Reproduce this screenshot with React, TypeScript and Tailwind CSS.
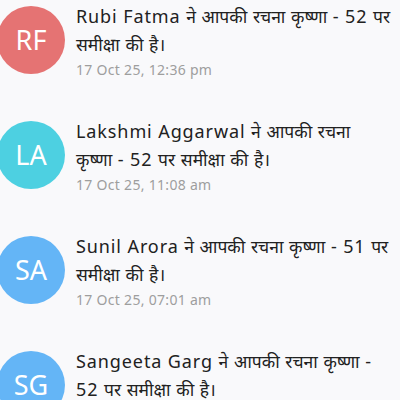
const items = [
  {
    initials: 'RF',
    color: 'bg-[#e57373]',
    lines: ['Rubi Fatma ने आपकी रचना कृष्णा - 52 पर', 'समीक्षा की है।'],
    time: '17 Oct 25, 12:36 pm',
  },
  {
    initials: 'LA',
    color: 'bg-[#4dd0e1]',
    lines: ['Lakshmi Aggarwal ने आपकी रचना', 'कृष्णा - 52 पर समीक्षा की है।'],
    time: '17 Oct 25, 11:08 am',
  },
  {
    initials: 'SA',
    color: 'bg-[#64b5f6]',
    lines: ['Sunil Arora ने आपकी रचना कृष्णा - 51 पर', 'समीक्षा की है।'],
    time: '17 Oct 25, 07:01 am',
  },
  {
    initials: 'SG',
    color: 'bg-[#64b5f6]',
    lines: ['Sangeeta Garg ने आपकी रचना कृष्णा -', '52 पर समीक्षा की है।'],
    time: '17 Oct 25, 06:40 am',
  },
];

// Devanagari runs are set a touch smaller so the mixed line keeps its width
function Line({ text }: { text: string }) {
  const parts = text.split(/([\u0900-\u097F]+)/);
  return (
    <span className="block whitespace-nowrap">
      {parts.map((p, i) =>
        /[\u0900-\u097F]/.test(p) ? (
          <span key={i} className="text-[17.5px] tracking-normal">
            {p}
          </span>
        ) : (
          <span key={i}>{p}</span>
        )
      )}
    </span>
  );
}

export default function App() {
  return (
    <main
      className="w-[400px] h-[400px] overflow-hidden bg-[#f9f9fb]"
      style={{ fontFamily: '"Noto Sans", "Open Sans", sans-serif' }}
    >
      <div className="flex flex-col pt-[2px]">
        {items.map((it) => (
          <div key={it.initials} className="flex items-start gap-[11px] h-[115px] shrink-0">
            <div
              className={`${it.color} w-[68px] h-[68px] rounded-full shrink-0 -ml-[3px] mt-[4px] flex items-center justify-center text-white text-[27px]`}
            >
              {it.initials}
            </div>
            <div className="flex flex-col">
              <p className="text-[18px] leading-[28px] tracking-[0.9px] text-[#212121]">
                {it.lines.map((l) => (
                  <Line key={l} text={l} />
                ))}
              </p>
              <p className="text-[14px] leading-[20px] tracking-[0.3px] text-[#9e9e9e] mt-[2px]">{it.time}</p>
            </div>
          </div>
        ))}
      </div>
    </main>
  );
}
